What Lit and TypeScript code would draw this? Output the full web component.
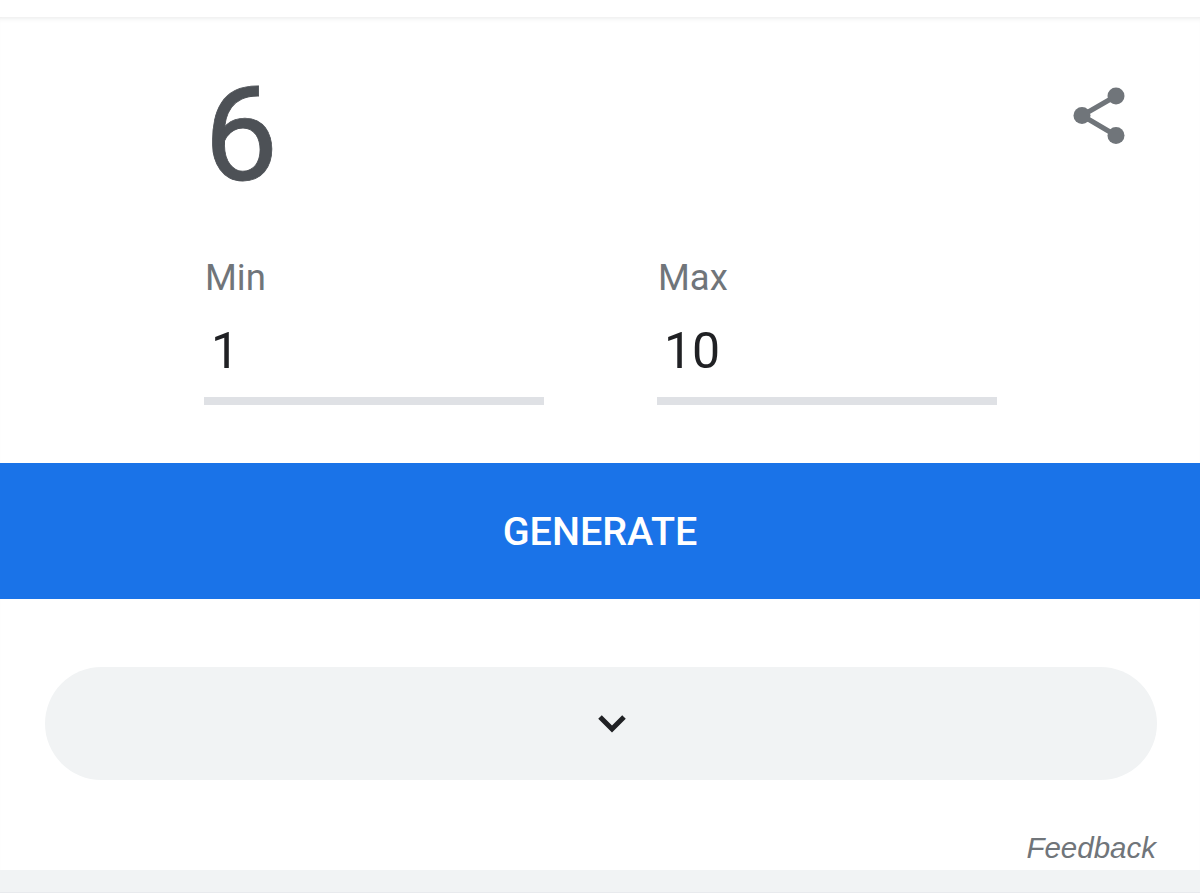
import { LitElement, html, css } from 'lit';
import { customElement } from 'lit/decorators.js';

@customElement('app-root')
export class AppRoot extends LitElement {
  static styles = css`
    :host {
      display: block;
      height: 896px;
      background: #fff;
      font-family: Roboto, "Liberation Sans", sans-serif;
      overflow: hidden;
    }

    .top {
      height: 17px;
      background: #fff;
    }

    .card {
      height: 853px;
      box-sizing: border-box;
      background: #fff;
      box-shadow: inset 0 5px 5px -4px rgba(60, 64, 67, 0.12);
      display: flex;
      flex-direction: column;
    }

    .result-row {
      height: 195px;
      display: flex;
      justify-content: space-between;
      align-items: flex-start;
      padding: 0 57px 0 204px;
    }

    .result {
      font-size: 132px;
      line-height: 155px;
      margin-top: 41px;
      color: #4d5156;
      -webkit-text-stroke: 0.8px #4d5156;
    }

    .share {
      width: 72px;
      height: 72px;
      margin-top: 63px;
    }

    .fields {
      display: flex;
      gap: 113px;
      padding-left: 204px;
    }

    .field {
      width: 340px;
    }

    .label {
      font-size: 36.5px;
      line-height: 42px;
      height: 42px;
      color: #70757a;
      padding: 45px 0 0 1px;
    }

    .value {
      font-size: 50px;
      line-height: 56px;
      color: #202124;
      padding: 24px 0 0 7px;
      height: 74px;
    }

    .line {
      height: 8px;
      background: #dfe1e5;
    }

    .generate {
      margin-top: 58px;
      height: 136px;
      background: #1a73e8;
      color: #fff;
      font-size: 39.5px;
      font-weight: 500;
      display: flex;
      align-items: center;
      justify-content: center;
    }

    .expand {
      margin: 68px 43px 0 45px;
      height: 113px;
      border-radius: 57px;
      background: #f1f3f4;
      display: flex;
      align-items: center;
      justify-content: center;
      padding-left: 22px;
    }

    .expand svg {
      display: block;
    }

    .feedback {
      margin-top: 49px;
      padding-right: 44px;
      text-align: right;
      font-family: "Liberation Sans", Arial, sans-serif;
      font-style: italic;
      font-size: 29.5px;
      line-height: 37px;
      color: #70757a;
    }

    .band {
      height: 22px;
      background: #f1f3f4;
      border-bottom: 1px solid #e8eaed;
    }
  `;

  render() {
    return html`
      <div class="top"></div>
      <div class="card">
        <div class="result-row">
          <div class="result">6</div>
          <svg class="share" viewBox="0 0 72 72" fill="#70757a">
            <path d="M45 16 L11 35.5 L45 55.5" fill="none" stroke="#70757a" stroke-width="5" />
            <circle cx="45" cy="16" r="8.5" />
            <circle cx="11" cy="35.5" r="8.5" />
            <circle cx="45" cy="55.5" r="8.5" />
          </svg>
        </div>
        <div class="fields">
          <div class="field">
            <div class="label">Min</div>
            <div class="value">1</div>
            <div class="line"></div>
          </div>
          <div class="field">
            <div class="label">Max</div>
            <div class="value">10</div>
            <div class="line"></div>
          </div>
        </div>
        <div class="generate">GENERATE</div>
        <div class="expand">
          <svg width="28" height="20" viewBox="0 0 28 20" fill="none" stroke="#202124" stroke-width="5">
            <path d="M2 3 L14 15 L26 3" />
          </svg>
        </div>
        <div class="feedback">Feedback</div>
      </div>
      <div class="band"></div>
    `;
  }
}
